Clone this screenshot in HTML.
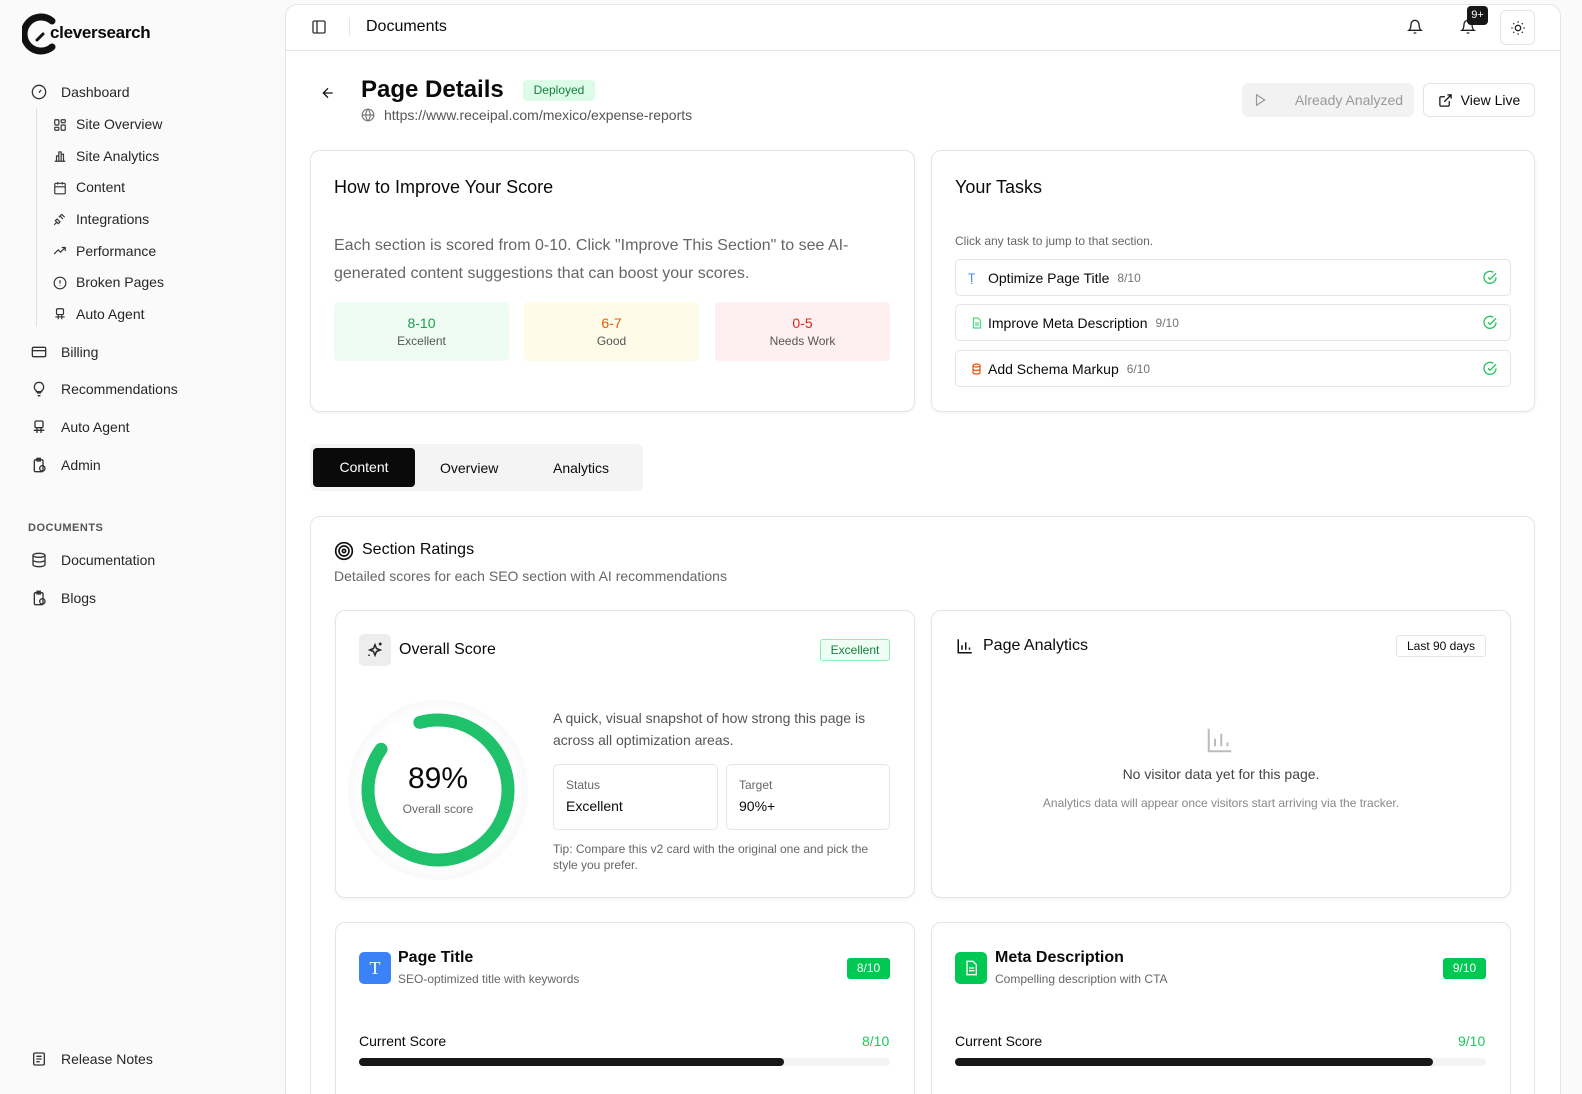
<!DOCTYPE html>
<html><head><meta charset="utf-8"><style>
*{box-sizing:border-box;margin:0;padding:0}
html,body{width:1582px;height:1094px;overflow:hidden}
body{background:#fafafa;font-family:"Liberation Sans",sans-serif;color:#0a0a0a;position:relative}
#w{position:absolute;left:0;top:0;width:1582px;height:1094px;overflow:hidden}
.a{position:absolute}
.nav{position:absolute;left:61px;font-size:14px;color:#262626}
.sub{position:absolute;left:76px;font-size:14px;color:#262626}
.ic{position:absolute;width:16px;height:16px}
.card{position:absolute;background:#fff;border:1px solid #e5e5e5;border-radius:10px}
.btn{position:absolute;border-radius:6px;font-size:14px;display:flex;align-items:center;justify-content:center;gap:10px}
.task{position:absolute;left:955px;width:556px;height:37px;border:1px solid #e5e5e5;border-radius:5px;font-size:14px;display:flex;align-items:center;padding-left:12px}
.task small{font-size:12px;color:#737373;margin-left:8px}
.chk{position:absolute;right:12px;top:10px}
svg{display:block}
</style></head><body><div id="w">
<!-- Sidebar -->
<svg class="a" style="left:22px;top:13px" width="40" height="42" viewBox="0 0 40 42"><path d="M30 8 A17 17 0 1 0 30 34" fill="none" stroke="#111" stroke-width="7" stroke-linecap="round"/><path d="M15 27 L21 21" stroke="#111" stroke-width="3" stroke-linecap="round"/></svg>
<div class="a" style="left:50px;top:23px;font-size:17px;font-weight:bold;letter-spacing:-0.3px">cleversearch</div>

<svg class="ic" style="left:31px;top:84px" viewBox="0 0 24 24" fill="none" stroke="#333" stroke-width="2"><circle cx="12" cy="12" r="10"/><path d="M12 13l3-4"/></svg>
<div class="nav" style="top:84px">Dashboard</div>
<div class="a" style="left:36px;top:108px;width:1px;height:218px;background:#e0e0e0"></div>
<svg class="ic" style="left:53px;top:117px;width:14px" viewBox="0 0 24 24" fill="none" stroke="#333" stroke-width="2"><rect x="3" y="3" width="7" height="9" rx="1"/><rect x="14" y="3" width="7" height="5" rx="1"/><rect x="14" y="12" width="7" height="9" rx="1"/><rect x="3" y="16" width="7" height="5" rx="1"/></svg>
<div class="sub" style="top:116px">Site Overview</div>
<svg class="ic" style="left:53px;top:148px;width:14px" viewBox="0 0 24 24" fill="none" stroke="#333" stroke-width="2"><path d="M3 21h18M6 21V12h4v9M10 21V5h4v16M14 21V9h4v12"/></svg>
<div class="sub" style="top:148px">Site Analytics</div>
<svg class="ic" style="left:53px;top:180px;width:14px" viewBox="0 0 24 24" fill="none" stroke="#333" stroke-width="2"><rect x="3" y="4" width="18" height="18" rx="2"/><path d="M3 10h18M8 2v4M16 2v4"/></svg>
<div class="sub" style="top:179px">Content</div>
<svg class="ic" style="left:53px;top:211px;width:14px" viewBox="0 0 24 24" fill="none" stroke="#333" stroke-width="2"><path d="M2 22l4-4M7 12l5 5-3 3-5-5zM12 7l5 5M15 4l5 5M10 9l5-5"/></svg>
<div class="sub" style="top:211px">Integrations</div>
<svg class="ic" style="left:53px;top:243px;width:14px" viewBox="0 0 24 24" fill="none" stroke="#333" stroke-width="2"><path d="M2 17l7-7 4 4 8-8M15 6h6v6"/></svg>
<div class="sub" style="top:243px">Performance</div>
<svg class="ic" style="left:53px;top:275px;width:14px" viewBox="0 0 24 24" fill="none" stroke="#333" stroke-width="2"><circle cx="12" cy="12" r="10"/><path d="M12 7v6M12 16v1"/></svg>
<div class="sub" style="top:274px">Broken Pages</div>
<svg class="ic" style="left:53px;top:306px;width:14px" viewBox="0 0 24 24" fill="none" stroke="#333" stroke-width="2"><rect x="6" y="3" width="12" height="10" rx="2"/><path d="M9 13v8M15 13v8M4 17h16"/></svg>
<div class="sub" style="top:306px">Auto Agent</div>

<svg class="ic" style="left:31px;top:344px" viewBox="0 0 24 24" fill="none" stroke="#333" stroke-width="2"><rect x="2" y="5" width="20" height="14" rx="2"/><path d="M2 10h20"/></svg>
<div class="nav" style="top:344px">Billing</div>
<svg class="ic" style="left:31px;top:381px" viewBox="0 0 24 24" fill="none" stroke="#333" stroke-width="2"><path d="M9 18h6M10 22h4M12 2a7 7 0 0 0-4 12.7V16h8v-1.3A7 7 0 0 0 12 2z"/></svg>
<div class="nav" style="top:381px">Recommendations</div>
<svg class="ic" style="left:31px;top:419px" viewBox="0 0 24 24" fill="none" stroke="#333" stroke-width="2"><rect x="6" y="3" width="12" height="10" rx="2"/><path d="M9 13v8M15 13v8M4 17h16"/></svg>
<div class="nav" style="top:419px">Auto Agent</div>
<svg class="ic" style="left:31px;top:457px" viewBox="0 0 24 24" fill="none" stroke="#333" stroke-width="2"><rect x="5" y="4" width="13" height="18" rx="2"/><path d="M9 2h5v4H9z"/><circle cx="17" cy="17" r="4"/></svg>
<div class="nav" style="top:457px">Admin</div>
<div class="a" style="left:28px;top:522px;font-size:11px;font-weight:bold;color:#555;letter-spacing:0.5px">DOCUMENTS</div>
<svg class="ic" style="left:31px;top:552px" viewBox="0 0 24 24" fill="none" stroke="#333" stroke-width="2"><ellipse cx="12" cy="5" rx="9" ry="3"/><path d="M3 5v14c0 1.7 4 3 9 3s9-1.3 9-3V5M3 12c0 1.7 4 3 9 3s9-1.3 9-3"/></svg>
<div class="nav" style="top:552px">Documentation</div>
<svg class="ic" style="left:31px;top:590px" viewBox="0 0 24 24" fill="none" stroke="#333" stroke-width="2"><rect x="5" y="4" width="13" height="18" rx="2"/><path d="M9 2h5v4H9z"/><circle cx="17" cy="17" r="4"/></svg>
<div class="nav" style="top:590px">Blogs</div>
<svg class="ic" style="left:31px;top:1051px" viewBox="0 0 24 24" fill="none" stroke="#333" stroke-width="2"><rect x="4" y="3" width="16" height="18" rx="2"/><path d="M8 8h8M8 12h8M8 16h5"/></svg>
<div class="nav" style="top:1051px">Release Notes</div>

<!-- Main panel -->
<div class="a" style="left:285px;top:4px;width:1276px;height:1100px;background:#fff;border:1px solid #e5e5e5;border-radius:12px"></div>
<div class="a" style="left:286px;top:50px;width:1274px;height:1px;background:#e5e5e5"></div>
<svg class="ic" style="left:311px;top:19px" viewBox="0 0 24 24" fill="none" stroke="#333" stroke-width="2"><rect x="3" y="3" width="18" height="18" rx="2"/><path d="M9 3v18"/></svg>
<div class="a" style="left:349px;top:18px;width:1px;height:18px;background:#e5e5e5"></div>
<div class="a" style="left:366px;top:18px;font-size:16px">Documents</div>
<svg class="ic" style="left:1407px;top:19px" viewBox="0 0 24 24" fill="none" stroke="#222" stroke-width="2"><path d="M6 8a6 6 0 0 1 12 0c0 7 3 9 3 9H3s3-2 3-9M10 21h4"/></svg>
<svg class="ic" style="left:1460px;top:19px" viewBox="0 0 24 24" fill="none" stroke="#222" stroke-width="2"><path d="M6 8a6 6 0 0 1 12 0c0 7 3 9 3 9H3s3-2 3-9M10 21h4"/></svg>
<div class="a" style="left:1467px;top:6px;width:21px;height:19px;background:#171717;color:#fff;border-radius:4px;font-size:11px;text-align:center;line-height:19px">9+</div>
<div class="a" style="left:1500px;top:10px;width:35px;height:35px;border:1px solid #e5e5e5;border-radius:6px"></div>
<svg class="ic" style="left:1510px;top:20px" viewBox="0 0 24 24" fill="none" stroke="#222" stroke-width="2"><circle cx="12" cy="12" r="4"/><path d="M12 2v2M12 20v2M4.9 4.9l1.4 1.4M17.7 17.7l1.4 1.4M2 12h2M20 12h2M4.9 19.1l1.4-1.4M17.7 6.3l1.4-1.4"/></svg>

<!-- Page header -->
<svg class="ic" style="left:320px;top:85px" viewBox="0 0 24 24" fill="none" stroke="#111" stroke-width="2"><path d="M19 12H5M12 19l-7-7 7-7"/></svg>
<div class="a" style="left:361px;top:76px;font-size:24px;font-weight:bold">Page Details</div>
<div class="a" style="left:523px;top:80px;width:72px;height:21px;background:#dcfce7;color:#15803d;border-radius:4px;font-size:12px;text-align:center;line-height:21px">Deployed</div>
<svg class="ic" style="left:361px;top:108px;width:14px;height:14px" viewBox="0 0 24 24" fill="none" stroke="#777" stroke-width="2"><circle cx="12" cy="12" r="10"/><path d="M2 12h20M12 2a15 15 0 0 1 0 20M12 2a15 15 0 0 0 0 20"/></svg>
<div class="a" style="left:384px;top:107px;font-size:14px;color:#555">https://www.receipal.com/mexico/expense-reports</div>
<div class="btn" style="left:1242px;top:83px;width:172px;height:34px;background:#f2f2f2;color:#999;gap:28px"><svg width="14" height="14" viewBox="0 0 24 24" fill="none" stroke="#999" stroke-width="2"><path d="M6 3l14 9-14 9z"/></svg>Already Analyzed</div>
<div class="btn" style="left:1423px;top:83px;width:112px;height:34px;border:1px solid #e5e5e5;gap:8px"><svg width="15" height="15" viewBox="0 0 24 24" fill="none" stroke="#111" stroke-width="2"><path d="M15 3h6v6M10 14L21 3M18 13v6a2 2 0 0 1-2 2H5a2 2 0 0 1-2-2V8a2 2 0 0 1 2-2h6"/></svg>View Live</div>

<!-- Improve card -->
<div class="card" style="left:310px;top:150px;width:605px;height:262px;box-shadow:0 1px 3px rgba(0,0,0,.06)"></div>
<div class="a" style="left:334px;top:177px;font-size:18px">How to Improve Your Score</div>
<div class="a" style="left:334px;top:232px;width:565px;font-size:16px;line-height:28px;color:#666">Each section is scored from 0-10. Click "Improve This Section" to see AI-generated content suggestions that can boost your scores.</div>
<div class="a" style="left:334px;top:302px;width:175px;height:59px;background:#effcf3;border-radius:4px;text-align:center"><div style="margin-top:13px;font-size:14px;color:#16a34a">8-10</div><div style="font-size:12px;color:#555;margin-top:3px">Excellent</div></div>
<div class="a" style="left:524px;top:302px;width:175px;height:59px;background:#fefbe8;border-radius:4px;text-align:center"><div style="margin-top:13px;font-size:14px;color:#ea580c">6-7</div><div style="font-size:12px;color:#555;margin-top:3px">Good</div></div>
<div class="a" style="left:715px;top:302px;width:175px;height:59px;background:#fef0f0;border-radius:4px;text-align:center"><div style="margin-top:13px;font-size:14px;color:#dc2626">0-5</div><div style="font-size:12px;color:#555;margin-top:3px">Needs Work</div></div>

<!-- Tasks card -->
<div class="card" style="left:931px;top:150px;width:604px;height:262px;box-shadow:0 1px 3px rgba(0,0,0,.06)"></div>
<div class="a" style="left:955px;top:177px;font-size:18px">Your Tasks</div>
<div class="a" style="left:955px;top:234px;font-size:12px;color:#666">Click any task to jump to that section.</div>
<div class="task" style="top:259px"><span style="color:#3b82f6;font-size:12px;width:20px">Ṭ</span>Optimize Page Title<small>8/10</small><svg class="chk" width="16" height="16" viewBox="0 0 24 24" fill="none" stroke="#22c55e" stroke-width="2"><path d="M21 11a9 9 0 1 1-4-7.5M9 11l3 3 9-9"/></svg></div>
<div class="task" style="top:304px"><svg width="20" height="12" viewBox="0 0 30 24" fill="none" stroke="#4ade80" stroke-width="2.5"><path d="M6 2h9l5 5v15H6zM9 12h8M9 16h8"/></svg>Improve Meta Description<small>9/10</small><svg class="chk" width="16" height="16" viewBox="0 0 24 24" fill="none" stroke="#22c55e" stroke-width="2"><path d="M21 11a9 9 0 1 1-4-7.5M9 11l3 3 9-9"/></svg></div>
<div class="task" style="top:350px"><svg width="20" height="12" viewBox="0 0 30 24" fill="none" stroke="#ea580c" stroke-width="2.5"><ellipse cx="12" cy="5" rx="7" ry="3"/><path d="M5 5v14c0 1.7 3 3 7 3s7-1.3 7-3V5M5 12c0 1.7 3 3 7 3s7-1.3 7-3"/></svg>Add Schema Markup<small>6/10</small><svg class="chk" width="16" height="16" viewBox="0 0 24 24" fill="none" stroke="#22c55e" stroke-width="2"><path d="M21 11a9 9 0 1 1-4-7.5M9 11l3 3 9-9"/></svg></div>

<!-- Tabs -->
<div class="a" style="left:310px;top:444px;width:333px;height:47px;background:#f4f4f5;border-radius:6px"></div>
<div class="a" style="left:313px;top:448px;width:102px;height:39px;background:#0a0a0a;color:#fff;border-radius:4px;font-size:14px;text-align:center;line-height:39px">Content</div>
<div class="a" style="left:440px;top:460px;font-size:14px">Overview</div>
<div class="a" style="left:553px;top:460px;font-size:14px">Analytics</div>

<!-- Section ratings -->
<div class="card" style="left:310px;top:516px;width:1225px;height:600px"></div>
<svg class="a" style="left:334px;top:541px" width="20" height="20" viewBox="0 0 24 24" fill="none" stroke="#111" stroke-width="2"><circle cx="12" cy="12" r="10"/><circle cx="12" cy="12" r="6"/><circle cx="12" cy="12" r="2"/></svg>
<div class="a" style="left:362px;top:541px;font-size:16px">Section Ratings</div>
<div class="a" style="left:334px;top:568px;font-size:14px;color:#666">Detailed scores for each SEO section with AI recommendations</div>

<!-- Overall score -->
<div class="card" style="left:335px;top:610px;width:580px;height:288px;box-shadow:0 1px 3px rgba(0,0,0,.05)"></div>
<div class="a" style="left:359px;top:634px;width:32px;height:32px;background:#ededed;border-radius:5px"></div>
<svg class="a" style="left:366px;top:641px" width="18" height="18" viewBox="0 0 24 24" fill="none" stroke="#222" stroke-width="2"><path d="M12 5l2 5 5 2-5 2-2 5-2-5-5-2 5-2zM19 2v4M17 4h4M4 18v2"/></svg>
<div class="a" style="left:399px;top:641px;font-size:16px">Overall Score</div>
<div class="a" style="left:820px;top:639px;width:70px;height:22px;border:1px solid #86efac;background:#f0fdf4;color:#15803d;border-radius:3px;font-size:12px;text-align:center;line-height:20px">Excellent</div>
<div class="a" style="left:348px;top:700px;width:180px;height:180px;border-radius:50%;background:radial-gradient(circle,#fff 60%,#f8f8f8 72%,#fff 100%)"></div>
<svg class="a" style="left:358px;top:710px" width="160" height="160" viewBox="0 0 160 160"><circle cx="80" cy="80" r="70" fill="none" stroke="#1fc16b" stroke-width="13" stroke-linecap="round" stroke-dasharray="391.5 500" transform="rotate(-105 80 80)"/></svg>
<div class="a" style="left:358px;top:762px;width:160px;text-align:center;font-size:30px">89%</div>
<div class="a" style="left:358px;top:802px;width:160px;text-align:center;font-size:12px;color:#666">Overall score</div>
<div class="a" style="left:553px;top:707px;width:345px;font-size:14px;line-height:22px;color:#555">A quick, visual snapshot of how strong this page is across all optimization areas.</div>
<div class="a" style="left:553px;top:764px;width:165px;height:66px;border:1px solid #e5e5e5;border-radius:5px;padding:13px 12px"><div style="font-size:12px;color:#666">Status</div><div style="font-size:14px;margin-top:6px">Excellent</div></div>
<div class="a" style="left:726px;top:764px;width:164px;height:66px;border:1px solid #e5e5e5;border-radius:5px;padding:13px 12px"><div style="font-size:12px;color:#666">Target</div><div style="font-size:14px;margin-top:6px">90%+</div></div>
<div class="a" style="left:553px;top:841px;width:340px;font-size:12px;line-height:16px;color:#666">Tip: Compare this v2 card with the original one and pick the style you prefer.</div>

<!-- Page analytics -->
<div class="card" style="left:931px;top:610px;width:580px;height:288px;box-shadow:0 1px 3px rgba(0,0,0,.05)"></div>
<svg class="a" style="left:956px;top:637px" width="18" height="18" viewBox="0 0 24 24" fill="none" stroke="#111" stroke-width="2"><path d="M3 3v18h18M8 17v-6M13 17V7M18 17v-3"/></svg>
<div class="a" style="left:983px;top:637px;font-size:16px">Page Analytics</div>
<div class="a" style="left:1396px;top:635px;width:90px;height:22px;border:1px solid #e5e5e5;border-radius:3px;font-size:12px;text-align:center;line-height:20px">Last 90 days</div>
<svg class="a" style="left:1205px;top:725px" width="30" height="30" viewBox="0 0 24 24" fill="none" stroke="#bbb" stroke-width="1.6"><path d="M3 3v18h18M8 17v-6M13 17V7M18 17v-3"/></svg>
<div class="a" style="left:931px;top:766px;width:580px;text-align:center;font-size:14px;color:#444">No visitor data yet for this page.</div>
<div class="a" style="left:931px;top:796px;width:580px;text-align:center;font-size:12px;color:#888">Analytics data will appear once visitors start arriving via the tracker.</div>

<!-- Page Title card -->
<div class="card" style="left:335px;top:922px;width:580px;height:200px"></div>
<div class="a" style="left:359px;top:952px;width:32px;height:32px;background:#3b82f6;border-radius:5px;color:#fff;font-family:'Liberation Serif',serif;font-size:18px;text-align:center;line-height:32px">T</div>
<div class="a" style="left:398px;top:949px;font-size:16px;font-weight:bold">Page Title</div>
<div class="a" style="left:398px;top:972px;font-size:12px;color:#666">SEO-optimized title with keywords</div>
<div class="a" style="left:847px;top:958px;width:43px;height:21px;background:#00c853;color:#fff;border-radius:3px;font-size:12px;text-align:center;line-height:21px">8/10</div>
<div class="a" style="left:359px;top:1033px;font-size:14px">Current Score</div>
<div class="a" style="left:862px;top:1033px;font-size:14px;color:#22c55e">8/10</div>
<div class="a" style="left:359px;top:1058px;width:531px;height:8px;background:#f3f3f3;border-radius:4px"><div style="width:80%;height:8px;background:#171717;border-radius:4px"></div></div>

<!-- Meta card -->
<div class="card" style="left:931px;top:922px;width:580px;height:200px"></div>
<div class="a" style="left:955px;top:952px;width:32px;height:32px;background:#00c853;border-radius:5px"></div>
<svg class="a" style="left:963px;top:960px" width="16" height="16" viewBox="0 0 24 24" fill="none" stroke="#fff" stroke-width="2"><path d="M6 2h9l5 5v15H6zM9 12h8M9 16h8"/></svg>
<div class="a" style="left:995px;top:949px;font-size:16px;font-weight:bold">Meta Description</div>
<div class="a" style="left:995px;top:972px;font-size:12px;color:#666">Compelling description with CTA</div>
<div class="a" style="left:1443px;top:958px;width:43px;height:21px;background:#00c853;color:#fff;border-radius:3px;font-size:12px;text-align:center;line-height:21px">9/10</div>
<div class="a" style="left:955px;top:1033px;font-size:14px">Current Score</div>
<div class="a" style="left:1458px;top:1033px;font-size:14px;color:#22c55e">9/10</div>
<div class="a" style="left:955px;top:1058px;width:531px;height:8px;background:#f3f3f3;border-radius:4px"><div style="width:90%;height:8px;background:#171717;border-radius:4px"></div></div>
</div></body></html>
